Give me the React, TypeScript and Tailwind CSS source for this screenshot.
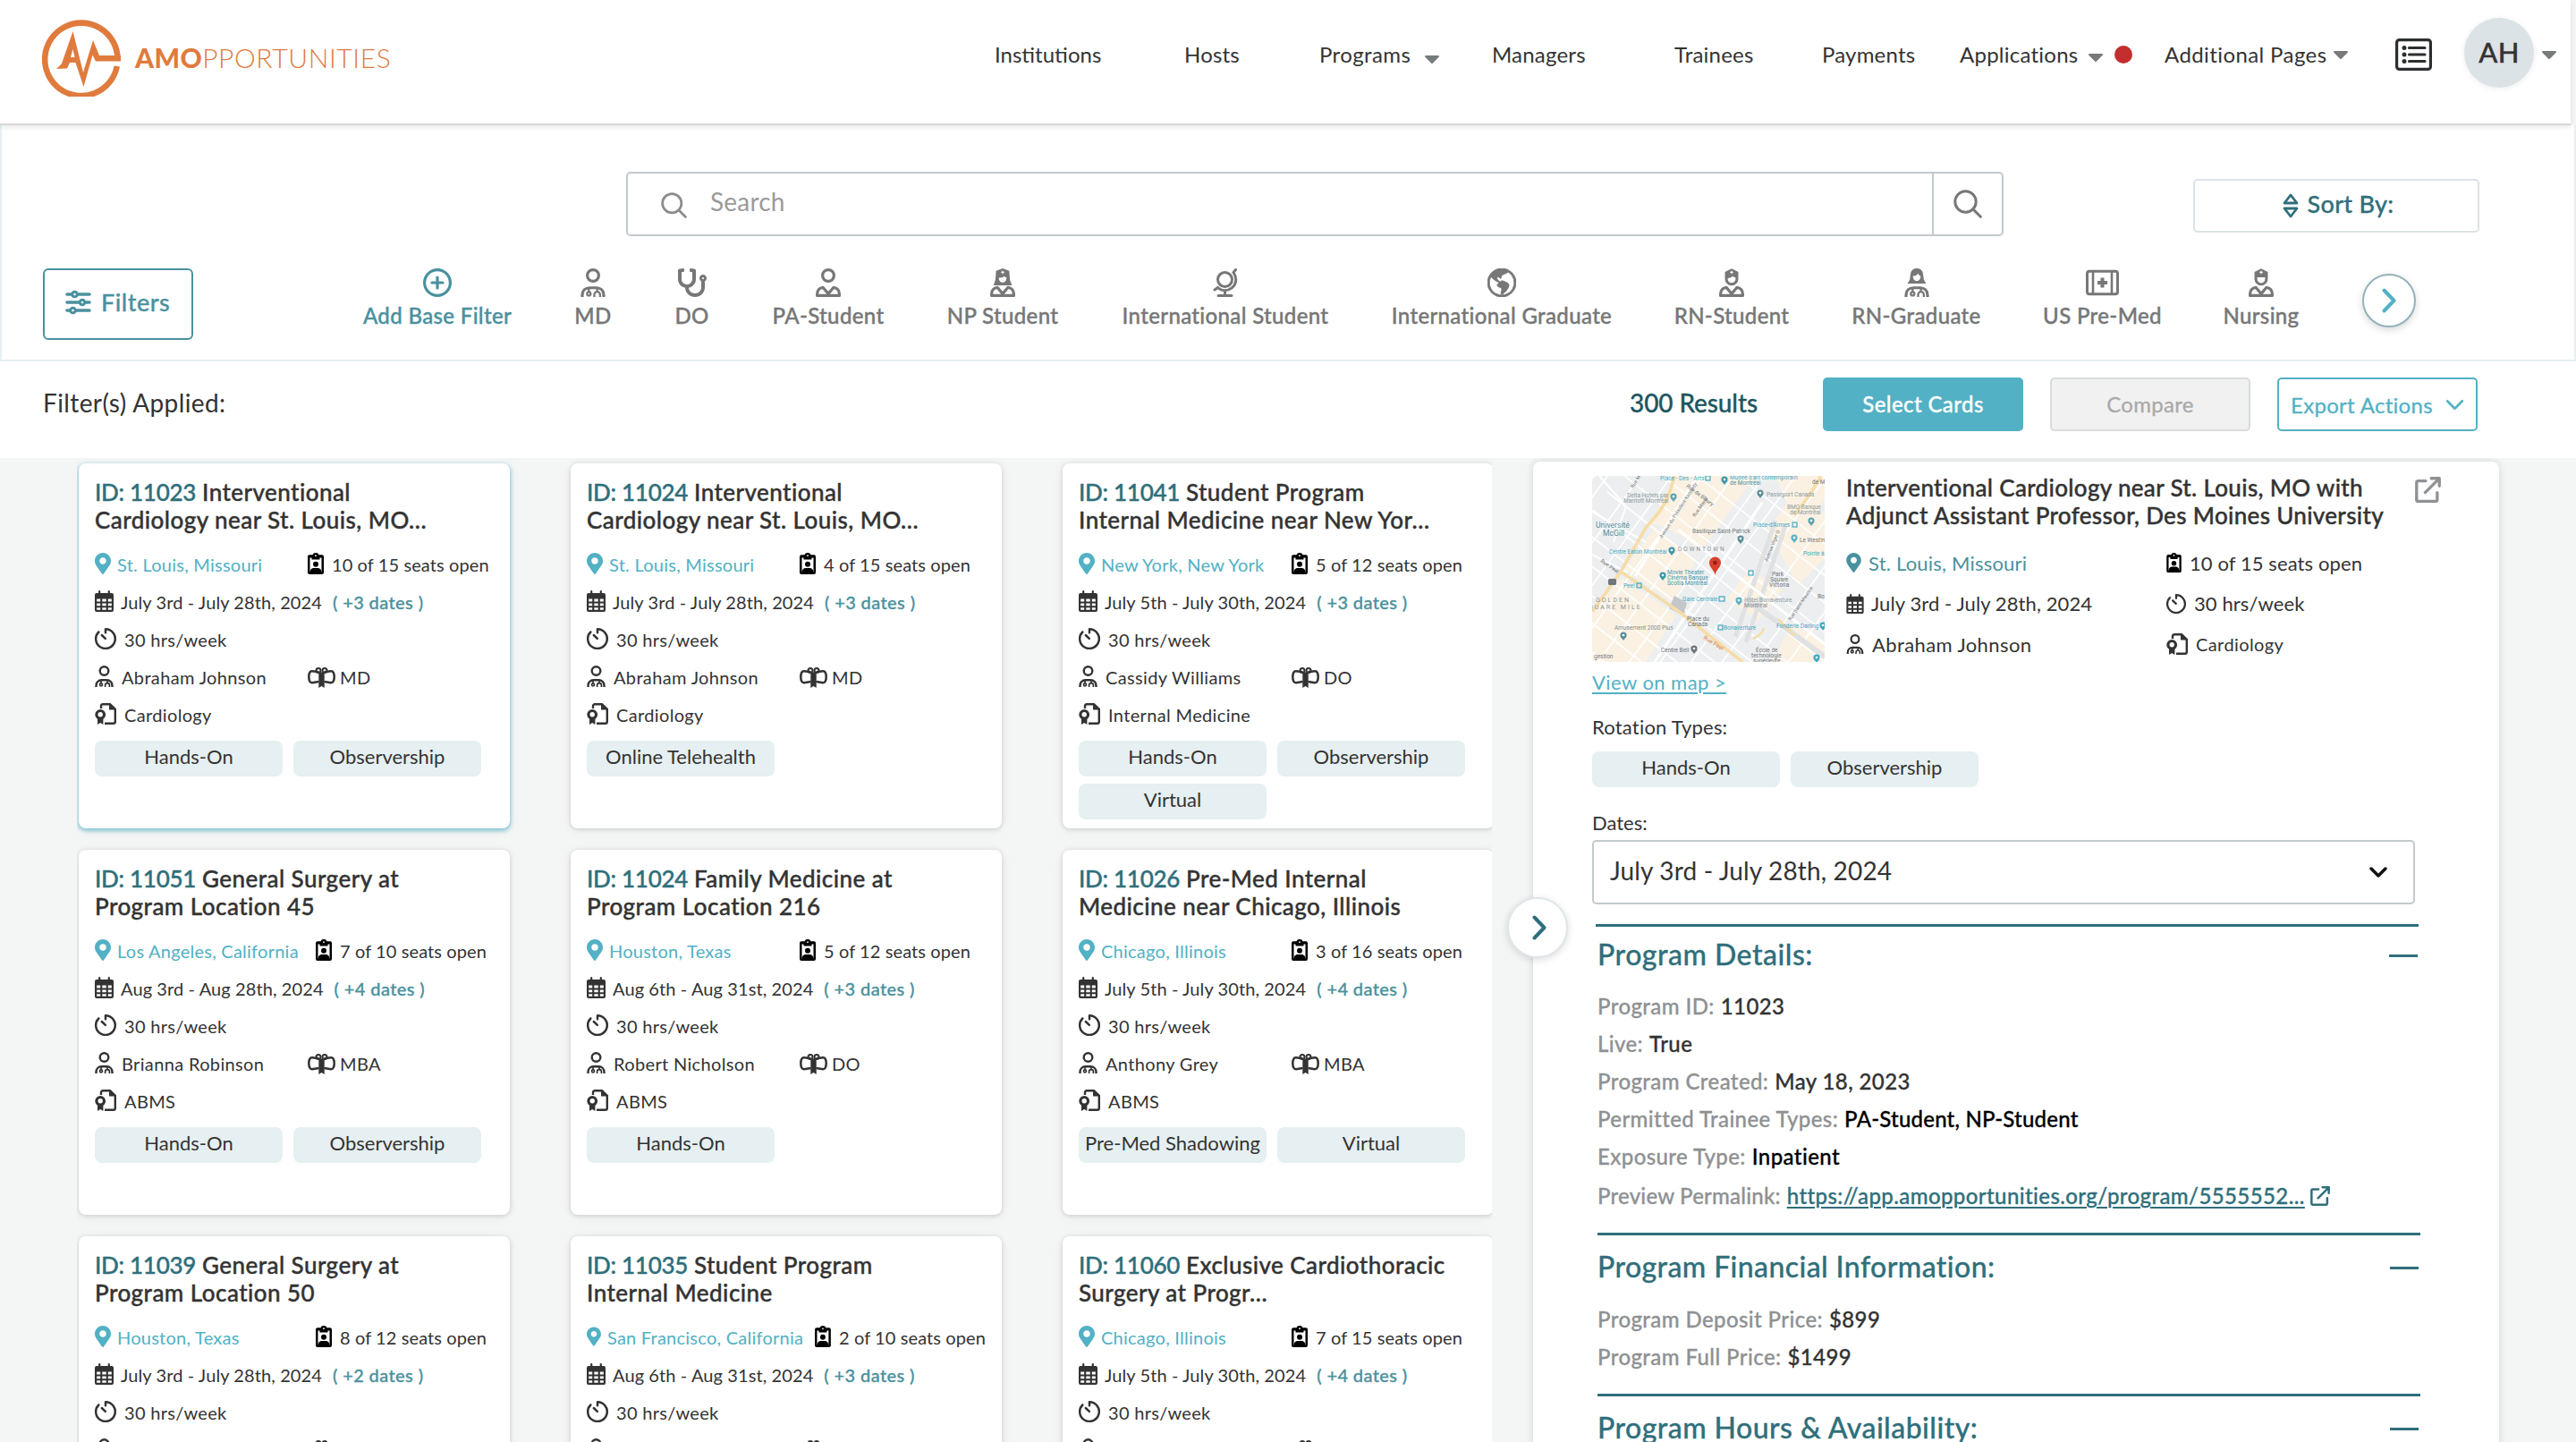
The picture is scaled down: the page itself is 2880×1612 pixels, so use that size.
import type { ReactNode } from "react";
import { FaMapMarkerAlt, FaStethoscope } from "react-icons/fa";
import { BsGlobeAmericas } from "react-icons/bs";

type IconProps = { className?: string };

type Program = {
  id: string;
  title: string[];
  location: string;
  seats: string;
  dates: string;
  more: string;
  doctor: string;
  degree: string;
  specialty: string;
  types: string[];
  wide?: boolean;
};

const programs: Program[] = [
  { id: "11023", title: ["Interventional", "Cardiology near St. Louis, MO…"], location: "St. Louis, Missouri", seats: "10 of 15", dates: "July 3rd - July 28th, 2024", more: "+3", doctor: "Abraham Johnson", degree: "MD", specialty: "Cardiology", types: ["Hands-On", "Observership"] },
  { id: "11024", title: ["Interventional", "Cardiology near St. Louis, MO…"], location: "St. Louis, Missouri", seats: "4 of 15", dates: "July 3rd - July 28th, 2024", more: "+3", doctor: "Abraham Johnson", degree: "MD", specialty: "Cardiology", types: ["Online Telehealth"] },
  { id: "11041", title: ["Student Program", "Internal Medicine near New Yor…"], location: "New York, New York", seats: "5 of 12", dates: "July 5th - July 30th, 2024", more: "+3", doctor: "Cassidy Williams", degree: "DO", specialty: "Internal Medicine", types: ["Hands-On", "Observership", "Virtual"] },
  { id: "11051", title: ["General Surgery at", "Program Location 45"], location: "Los Angeles, California", seats: "7 of 10", dates: "Aug 3rd - Aug 28th, 2024", more: "+4", doctor: "Brianna Robinson", degree: "MBA", specialty: "ABMS", types: ["Hands-On", "Observership"], wide: true },
  { id: "11024", title: ["Family Medicine at", "Program Location 216"], location: "Houston, Texas", seats: "5 of 12", dates: "Aug 6th - Aug 31st, 2024", more: "+3", doctor: "Robert Nicholson", degree: "DO", specialty: "ABMS", types: ["Hands-On"] },
  { id: "11026", title: ["Pre-Med Internal", "Medicine near Chicago, Illinois"], location: "Chicago, Illinois", seats: "3 of 16", dates: "July 5th - July 30th, 2024", more: "+4", doctor: "Anthony Grey", degree: "MBA", specialty: "ABMS", types: ["Pre-Med Shadowing", "Virtual"] },
  { id: "11039", title: ["General Surgery at", "Program Location 50"], location: "Houston, Texas", seats: "8 of 12", dates: "July 3rd - July 28th, 2024", more: "+2", doctor: "Brianna Robinson", degree: "MBA", specialty: "ABMS", types: ["Hands-On"], wide: true },
  { id: "11035", title: ["Student Program", "Internal Medicine"], location: "San Francisco, California", seats: "2 of 10", dates: "Aug 6th - Aug 31st, 2024", more: "+3", doctor: "Robert Nicholson", degree: "DO", specialty: "ABMS", types: ["Hands-On"] },
  { id: "11060", title: ["Exclusive Cardiothoracic", "Surgery at Progr…"], location: "Chicago, Illinois", seats: "7 of 15", dates: "July 5th - July 30th, 2024", more: "+4", doctor: "Anthony Grey", degree: "MBA", specialty: "ABMS", types: ["Virtual"] },
];

/* ---------- Icons ---------- */

function Logo() {
  return (
    <svg className="w-[88px] h-[88px]" viewBox="0 0 88 88" fill="none">
      <path d="M84.5 45A40.7 40.7 0 1 0 83.8 54" stroke="#e07b3e" strokeWidth="6.6" />
      <path d="M83 50.500h6" stroke="#fff" strokeWidth="4" />
      <path
        d="M16 57l6-6L34.500 15 46 61 57 25l7 17h24v6.500H60l-3.500-7L46.500 77 37.500 50H31l-3 6.500zM32 44h4.500l-2-9z"
        fill="#e07b3e"
      />
    </svg>
  );
}

function Caret({ className = "" }: IconProps) {
  return (
    <svg className={`w-4 h-[9px] shrink-0 ${className}`} viewBox="0 0 16 9" fill="#777b7c">
      <path d="M1 0h14a1 1 0 0 1 .7 1.700L8.700 8.700a1 1 0 0 1-1.400 0L.3 1.700A1 1 0 0 1 1 0z" />
    </svg>
  );
}

function ListIcon() {
  return (
    <svg className="w-[41px] h-9" viewBox="0 0 41 36" fill="none" stroke="#2b2f30" strokeWidth="3.200">
      <rect x="1.600" y="1.600" width="37.800" height="32.800" rx="3" />
      <path d="M15.500 10.500H33M15.500 18H33M15.500 25.500H33" strokeLinecap="round" />
      <g fill="#2b2f30" stroke="none">
        <circle cx="10" cy="10.500" r="2.500" />
        <circle cx="10" cy="18" r="2.500" />
        <circle cx="10" cy="25.500" r="2.500" />
      </g>
    </svg>
  );
}

function SearchIcon({ className = "" }: IconProps) {
  return (
    <svg className={className} viewBox="0 0 32 32" fill="none" stroke="currentColor" strokeWidth="3" strokeLinecap="round">
      <circle cx="13.500" cy="13.500" r="11.700" />
      <path d="M22 22l8.300 8.300" />
    </svg>
  );
}

function Chevron({ className = "" }: IconProps) {
  return (
    <svg className={className} viewBox="0 0 16 28" fill="none" stroke="currentColor" strokeWidth="4" strokeLinecap="round" strokeLinejoin="round">
      <path d="M2.500 2.500L13.500 14 2.500 25.500" />
    </svg>
  );
}

function ChevronDown({ className = "" }: IconProps) {
  return (
    <svg className={className} viewBox="0 0 20 12" fill="none" stroke="currentColor" strokeLinecap="round" strokeLinejoin="round">
      <path d="M2 2l8 8 8-8" />
    </svg>
  );
}

function SortIcon() {
  return (
    <svg className="w-[18px] h-7" viewBox="0 0 18 28" fill="none" stroke="currentColor" strokeWidth="2.800" strokeLinejoin="round">
      <path d="M9 2l7 9H2zM9 26l7-9H2z" />
    </svg>
  );
}

function SlidersIcon() {
  return (
    <svg className="w-[29px] h-7" viewBox="0 0 29 28" fill="none" stroke="currentColor" strokeWidth="3.600" strokeLinecap="round">
      <path d="M2 5h25M2 14h25M2 23h25" />
      <g fill="#fff" strokeWidth="3">
        <circle cx="10.500" cy="5" r="2.800" />
        <circle cx="19" cy="14" r="2.800" />
        <circle cx="8.500" cy="23" r="2.800" />
      </g>
    </svg>
  );
}

function PlusCircle() {
  return (
    <svg className="w-8 h-8" viewBox="0 0 32 32" fill="none" stroke="currentColor" strokeWidth="3.200" strokeLinecap="round">
      <circle cx="16" cy="16" r="14.400" />
      <path d="M16 10v12M10 16h12" />
    </svg>
  );
}

const scrubs = "M1.500 24v-1.500c0-3.800 2.600-6.200 6-6.200h6c3.400 0 6 2.400 6 6.200V24";

function DoctorIcon({ className = "" }: IconProps) {
  return (
    <svg className={className} viewBox="0 0 21 24" fill="none" stroke="currentColor" strokeWidth="2.400">
      <circle cx="10.500" cy="6" r="4.800" />
      <path d={scrubs} />
      <path d="M7 16.500v3M14 16.500v3M11.600 24v-2a2.400 2.400 0 0 1 4.800 0v2" strokeWidth="1.700" />
      <circle cx="7" cy="21.300" r="1.500" strokeWidth="1.700" />
    </svg>
  );
}

const collar = "M1.200 22.800v-1.300c0-3 2-5.200 4.800-5.500l4.500 5.300 4.500-5.300c2.800.3 4.800 2.500 4.800 5.500v1.300z";

function StudentIcon() {
  return (
    <svg className="w-7 h-8" viewBox="0 0 21 24" fill="none" stroke="currentColor" strokeWidth="2.400" strokeLinejoin="round">
      <circle cx="10.500" cy="6" r="4.800" />
      <path d={collar} />
    </svg>
  );
}

function NurseIcon({ hair = "none" }: { hair?: "none" | "part" | "long" }) {
  return (
    <svg className="w-7 h-8" viewBox="0 0 21 24" fill="none" stroke="currentColor" strokeWidth="2.400" strokeLinejoin="round">
      {hair === "long" ? (
        <>
          <path d="M10.500 0L16 2l.6 7.500 1.600 4.700H2.800l1.600-4.700L5 2z" fill="currentColor" stroke="none" />
          <path d="M7.300 7.800c2.200.2 3.600-.3 4.500-1.200.5.700 1.200 1.100 1.900 1.200v.6c0 2-1.400 3.400-3.200 3.400s-3.200-1.400-3.200-3.400z" fill="#fff" stroke="none" />
        </>
      ) : (
        <>
          <path d="M4.900 3L10.500.2 16.100 3v5.800a5.600 5.600 0 0 1-11.200 0z" fill="currentColor" stroke="none" />
          <path
            d={hair === "part" ? "M7.200 8.200c1.900 0 3.300-.6 4.200-1.800.5.800 1.400 1.100 2.400 1.300v1.200a3.300 3.300 0 0 1-6.600 0z" : "M7.200 7.500h6.600v1.500a3.300 3.300 0 0 1-6.600 0z"}
            fill="#fff"
            stroke="none"
          />
        </>
      )}
      <path d="M10.500 2v2.600M9.200 3.300h2.600" stroke="#fff" strokeWidth=".9" />
      <path d={collar} />
    </svg>
  );
}

function GraduateIcon() {
  return (
    <svg className="w-7 h-8" viewBox="0 0 21 24" fill="none" stroke="currentColor" strokeWidth="2.400">
      <path d="M10.500 0c3 0 5 2 5.300 5l.6 4.500 1.900 3.300H2.700l1.900-3.300.6-4.500c.3-3 2.300-5 5.300-5z" fill="currentColor" stroke="none" />
      <path d="M7.300 6.400c2.200.2 3.500-1 4.200-2.300.5 1.400 1.200 2 2.200 2.300v.8c0 2-1.400 3.500-3.200 3.500S7.300 9.200 7.300 7.200z" fill="#fff" stroke="none" />
      <path d={scrubs} />
      <path d="M7 16.500v3M14 16.500v3M11.600 24v-2a2.400 2.400 0 0 1 4.800 0v2" strokeWidth="1.700" />
      <circle cx="7" cy="21.300" r="1.500" strokeWidth="1.700" />
    </svg>
  );
}

function GlobeStandIcon() {
  return (
    <svg className="w-7 h-8" viewBox="0 0 28 32" fill="none" stroke="currentColor" strokeWidth="3" strokeLinecap="round">
      <circle cx="13.500" cy="12.500" r="8" />
      <path d="M25.500 1.500l-2.500 3c4.500 6.500 3 13.500-1.500 17.200-5 4.100-11.500 4-16-.2l-3.500 2.500M13.500 25v5M6 30.500h15" />
    </svg>
  );
}

function FirstAidIcon() {
  return (
    <svg className="w-[37px] h-8" viewBox="0 0 37 32" fill="none" stroke="currentColor" strokeWidth="3">
      <rect x="1.500" y="3.300" width="34" height="25.500" rx="2.500" />
      <path d="M8 3.500v25M29 3.500v25" strokeWidth="2.600" />
      <path d="M18.500 10.500v11M13 16h11" strokeWidth="4" />
    </svg>
  );
}

function SeatsIcon({ className = "" }: IconProps) {
  return (
    <svg className={className} viewBox="0 0 18 24" fill="#000">
      <path fillRule="evenodd" d="M5.500 2.200A3.600 3.600 0 0 1 9 0a3.600 3.600 0 0 1 3.500 2.200H16a2 2 0 0 1 2 2V22a2 2 0 0 1-2 2H2a2 2 0 0 1-2-2V4.200a2 2 0 0 1 2-2zM2.500 5.500v16h13v-16h-2v2h-9v-2z" />
      <circle cx="9" cy="12.700" r="3" />
      <path d="M2.500 22.500c0-4 2-5.500 4.500-5.500h4c2.500 0 4.500 1.500 4.500 5.500z" />
      <circle cx="9" cy="3.200" r=".9" fill="#fff" />
    </svg>
  );
}

function CalendarIcon({ className = "" }: IconProps) {
  return (
    <svg className={className} viewBox="0 0 21 24">
      <path
        fill="currentColor"
        d="M5.200 0a1.100 1.100 0 0 1 1.100 1.100V3h8.400V1.100a1.100 1.100 0 0 1 2.200 0V3H19a2 2 0 0 1 2 2v17a2 2 0 0 1-2 2H2a2 2 0 0 1-2-2V5a2 2 0 0 1 2-2h2.100V1.100A1.100 1.100 0 0 1 5.200 0z"
      />
      <path fill="#fff" d="M2.200 9.500h4v2.900h-4zM8.300 9.500h4.400v2.900H8.300zM14.800 9.500h4v2.900h-4zM2.200 14.400h4v2.900h-4zM8.300 14.400h4.400v2.900H8.300zM14.800 14.400h4v2.900h-4zM2.200 19.300h4v2.400h-4zM8.300 19.300h4.400v2.400H8.300zM14.800 19.300h4v2.400h-4z" />
    </svg>
  );
}

function TimerIcon({ className = "" }: IconProps) {
  return (
    <svg className={className} viewBox="0 0 24 24" fill="none" stroke="currentColor" strokeWidth="2.500" strokeLinecap="round" strokeLinejoin="round">
      <path d="M12 5.200V1.300A10.800 10.800 0 1 1 4.300 4.500" />
      <path d="M7.800 8l4 3.800" />
    </svg>
  );
}

function DiplomaIcon() {
  return (
    <svg className="w-[31px] h-[23px] shrink-0" viewBox="0 0 31 23" fill="none" stroke="currentColor" strokeWidth="2.500">
      <path d="M12.500 5.300L5 4.200C2.500 4 1.300 6.800 1.300 10.700S2.500 17.500 5 17.300l7.500-1.200M18.500 5.300L26 4.200c2.500-.2 3.700 2.600 3.700 6.500s-1.200 6.800-3.700 6.600l-7.500-1.200" />
      <circle cx="12" cy="3.600" r="2.500" strokeWidth="2" />
      <circle cx="19" cy="3.600" r="2.500" strokeWidth="2" />
      <path d="M12.300 5.500h6.400V23l-3.200-2-3.200 2z" fill="currentColor" stroke="none" />
    </svg>
  );
}

function CertificateIcon({ className = "" }: IconProps) {
  return (
    <svg className={className} viewBox="0 0 24 24" fill="none" stroke="currentColor" strokeWidth="2.400">
      <path d="M7 6V3.200c0-1.200.8-2 2-2h8l5.800 5.600V20.800c0 1.200-.8 2-2 2H11" />
      <path d="M16 .8V7.500h7.500z" fill="currentColor" stroke="none" />
      <circle cx="6.200" cy="12.800" r="4.300" strokeWidth="3.200" />
      <path d="M3 16.500V24l3.200-2 3.200 2v-7.500z" fill="currentColor" stroke="none" />
    </svg>
  );
}

function ExternalIcon({ className = "" }: IconProps) {
  return (
    <svg className={className} viewBox="0 0 28 28" fill="none" stroke="currentColor" strokeWidth="3.200" strokeLinecap="round" strokeLinejoin="round">
      <path d="M11.500 4.500H3.700a2 2 0 0 0-2 2v18a2 2 0 0 0 2 2h18.300a2 2 0 0 0 2-2v-7.500" />
      <path d="M17.500 1.700h8.800V10M26 2L11 17" />
    </svg>
  );
}

/* ---------- Header ---------- */

function Header() {
  return (
    <header className="relative z-10 w-[2874px] h-[140px] bg-white border-b-2 border-[#d5d8d8] shadow-[0_2px_6px_rgba(0,0,0,0.10)] flex text-[24px] text-[#333]">
      <div className="flex items-center w-[1112px] h-[128px] pl-[47px]">
        <Logo />
        <div className="ml-4 text-[30px] text-[#e07b3e] whitespace-nowrap">
          <span className="font-black tracking-[0.4px]">AMO</span>
          <span className="font-light tracking-[0.6px]">PPORTUNITIES</span>
        </div>
      </div>
      <nav className="flex items-center h-[121px] whitespace-nowrap tracking-[0.2px]">
        <a className="w-[212px] tracking-[0px]">Institutions</a>
        <a className="w-[151px]">Hosts</a>
        <a className="w-[193px] flex items-center tracking-[0.4px]">
          <span className="w-[118px]">Programs</span>
          <Caret className="mt-3" />
        </a>
        <a className="w-[204px]">Managers</a>
        <a className="w-[165px]">Trainees</a>
        <a className="w-[154px]">Payments</a>
        <a className="w-[229px] flex items-center tracking-[0.25px]">
          <span className="w-[144px]">Applications</span>
          <Caret className="mt-2" />
          <span className="ml-[13px] w-5 h-5 rounded-full bg-[#c42e2e]" />
        </a>
        <a className="w-[258px] flex items-center tracking-[0.4px]">
          <span className="w-[189px]">Additional Pages</span>
          <Caret className="mt-[2px]" />
        </a>
        <ListIcon />
        <div className="ml-[36px] mb-1 w-[78px] h-[78px] rounded-full bg-[#dce3e6] flex items-center justify-center text-[31px] font-medium [-webkit-text-stroke:0.4px] shadow-[0_1px_6px_rgba(0,0,0,0.08)]">
          AH
        </div>
        <Caret className="ml-[9px] mt-[2px]" />
      </nav>
    </header>
  );
}

/* ---------- Search and base filters ---------- */

function BaseFilter({ icon, label, width }: { icon: ReactNode; label: string; width: string }) {
  return (
    <div className={`${width} shrink-0 flex flex-col items-center whitespace-nowrap`}>
      <div className="h-8 flex items-center">{icon}</div>
      <span className="mt-[7px] leading-[28px]">{label}</span>
    </div>
  );
}

function FilterBar() {
  return (
    <section className="h-[264px] border-2 border-t-0 border-[#e6eff2] bg-white">
      <div className="flex pt-[52px] pl-[698px]">
        <div className="w-[1540px] h-[72px] border-2 border-[#c3c9cc] rounded-[5px] flex">
          <div className="flex-1 flex items-center pl-[37px]">
            <SearchIcon className="w-[29px] h-[29px] mt-[2px] text-[#8c8c8c]" />
            <span className="ml-[26px] mb-[6px] text-[28px] text-[#9a9a9a] tracking-[0.2px]">Search</span>
          </div>
          <div className="w-[78px] border-l-2 border-[#c3c9cc] flex items-center justify-center text-[#777]">
            <SearchIcon className="w-8 h-8" />
          </div>
        </div>
        <div className="mt-2 ml-[212px] w-[320px] h-[60px] border-2 border-[#dce3e6] rounded-[5px] flex items-center justify-center gap-[10px] text-[27px] text-[#2f6f7b] font-medium tracking-[0.3px] [-webkit-text-stroke:0.3px] pl-1">
          <SortIcon />
          <span className="mb-1">Sort By:</span>
        </div>
      </div>
      <div className="flex mt-9 pl-[46px]">
        <button className="w-[168px] h-[80px] border-2 border-[#4a919e] rounded-[6px] flex items-center pl-[23px] pb-1 gap-[11px] text-[27px] font-medium tracking-[0.5px] [-webkit-text-stroke:0.3px] text-[#4a919e]">
          <SlidersIcon />
          Filters
        </button>
        <div className="ml-[189px] flex gap-[71px] text-[24px] font-medium text-[#777] tracking-[0.35px] [-webkit-text-stroke:0.4px]">
          <div className="text-[#4a919e]">
            <BaseFilter icon={<PlusCircle />} label="Add Base Filter" width="w-[168px]" />
          </div>
          <BaseFilter icon={<DoctorIcon className="w-7 h-8" />} label="MD" width="w-[38px]" />
          <BaseFilter icon={<FaStethoscope className="w-8 h-8" />} label="DO" width="w-[41px]" />
          <BaseFilter icon={<StudentIcon />} label="PA-Student" width="w-[122px]" />
          <BaseFilter icon={<NurseIcon hair="long" />} label="NP Student" width="w-[126px]" />
          <BaseFilter icon={<GlobeStandIcon />} label="International Student" width="w-[230px]" />
          <BaseFilter icon={<BsGlobeAmericas className="w-8 h-8" stroke="currentColor" strokeWidth="0.500" />} label="International Graduate" width="w-[246px]" />
          <BaseFilter icon={<NurseIcon hair="part" />} label="RN-Student" width="w-[126px]" />
          <BaseFilter icon={<GraduateIcon />} label="RN-Graduate" width="w-[145px]" />
          <BaseFilter icon={<FirstAidIcon />} label="US Pre-Med" width="w-[129px]" />
          <BaseFilter icon={<NurseIcon />} label="Nursing" width="w-[84px]" />
        </div>
        <button className="ml-[71px] mt-[6px] w-[60px] h-[60px] rounded-full border-2 border-[#93b3ba] bg-white shadow-[0_3px_8px_rgba(0,0,0,0.15)] flex items-center justify-center text-[#52b1c4]">
          <Chevron className="w-4 h-7" />
        </button>
      </div>
    </section>
  );
}

function ResultsBar() {
  return (
    <section className="h-[108px] bg-white flex pt-[18px] pl-12 text-[24px] whitespace-nowrap">
      <div className="w-[1774px] pt-[11px] text-[28px] leading-[34px] text-[#333] tracking-[0.4px]">Filter(s) Applied:</div>
      <div className="w-[216px] pt-[11px] text-[28px] leading-[34px] text-[#1f5660] font-medium tracking-[-0.1px] [-webkit-text-stroke:0.3px]">300 Results</div>
      <div className="flex gap-[30px] tracking-[0.3px]">
        <button className="w-[224px] h-[60px] rounded-[5px] bg-[#52b1c4] text-white font-medium [-webkit-text-stroke:0.3px] tracking-[0.4px]">Select Cards</button>
        <button className="w-[224px] h-[60px] rounded-[5px] bg-[#f1f1f1] border-2 border-[#d9dcdc] text-[#a9a9a9] [-webkit-text-stroke:0.3px]">Compare</button>
        <button className="w-[224px] h-[60px] rounded-[5px] border-2 border-[#52b1c4] text-[#52b1c4] [-webkit-text-stroke:0.3px] flex items-center pl-[13px] pt-[1px]">
          <span className="w-[173px] text-left">Export Actions</span>
          <ChevronDown className="w-[21px] h-[13px] stroke-[2.5]" />
        </button>
      </div>
    </section>
  );
}

/* ---------- Program cards ---------- */

function TypeChip({ label }: { label: string }) {
  return (
    <div className="w-[210px] h-10 rounded-[8px] bg-[#e6eff1] pb-[5px] flex items-center justify-center text-[22px] text-[#333] whitespace-nowrap">
      {label}
    </div>
  );
}

function ProgramCard({ program, selected }: { program: Program; selected: boolean }) {
  return (
    <div
      className={`w-[482px] h-[408px] shrink-0 rounded-[8px] bg-white px-[18px] pt-[17px] text-[20px] text-[#333] whitespace-nowrap ${
        selected
          ? "shadow-[0_2px_4px_1px_rgba(82,177,196,0.65),0_2px_14px_rgba(0,0,0,0.06)]"
          : "shadow-[0_1px_5px_rgba(0,0,0,0.16),0_2px_14px_rgba(0,0,0,0.05)]"
      }`}
    >
      <h3 className="text-[26px] leading-[31px] font-medium tracking-[0.45px] [-webkit-text-stroke:0.4px]">
        <span className="text-[#2f6f7b] tracking-[-0.3px]">ID: {program.id}</span> {program.title[0]}
        <br />
        {program.title[1]}
      </h3>
      <div className="mt-[13px] h-[42px] flex items-center">
        <div className={`${program.wide ? "min-w-[234px]" : "min-w-[225px]"} mr-[13px] flex items-center text-[#52b1c4] tracking-[0.25px]`}>
          <FaMapMarkerAlt className="w-[18px] h-6 mb-[2px] mr-[7px]" />
          {program.location}
        </div>
        <SeatsIcon className="w-[18px] h-6 mb-[2px] mr-[9px]" />
        <span className="tracking-[0.1px]">{program.seats} seats open</span>
      </div>
      <div className="h-[42px] flex items-center">
        <CalendarIcon className="w-[21px] h-6 mb-[2px] mr-2" />
        <span className="tracking-[0.1px]">{program.dates}</span>
        <span className="ml-3 font-medium text-[#4a919e] tracking-[0.4px] [-webkit-text-stroke:0.3px]">( {program.more} dates )</span>
      </div>
      <div className="h-[42px] flex items-center tracking-[0.3px]">
        <TimerIcon className="w-6 h-6 mb-[2px] mr-[9px]" />
        30 hrs/week
      </div>
      <div className="h-[42px] flex items-center tracking-[0.35px]">
        <div className="min-w-[238px] flex items-center">
          <DoctorIcon className="w-[21px] h-6 mb-[2px] mr-[9px]" />
          {program.doctor}
        </div>
        <DiplomaIcon />
        <span className="ml-[5px]">{program.degree}</span>
      </div>
      <div className="h-[42px] flex items-center tracking-[0.35px]">
        <CertificateIcon className="w-6 h-6 mb-[2px] mr-[9px]" />
        {program.specialty}
      </div>
      <div className="mt-2 flex flex-wrap gap-x-3 gap-y-2">
        {program.types.map((type) => (
          <TypeChip key={type} label={type} />
        ))}
      </div>
    </div>
  );
}

/* ---------- Map thumbnail ---------- */

const mapLabels: { x: number; y: number; text: string; color?: string; size?: number }[] = [
  { x: 76, y: 5, text: "Place - Des - Arts", color: "#3fa9c4" },
  { x: 154, y: 4, text: "Musée d'art contemporain", color: "#3fa9c4" },
  { x: 154, y: 10, text: "de Montréal", color: "#4f8f9c" },
  { x: 246, y: 9, text: "de M" },
  { x: 39, y: 24, text: "Delta Hotels par", color: "#8a9aa0" },
  { x: 35, y: 30, text: "Marriott Montréal", color: "#8a9aa0" },
  { x: 195, y: 23, text: "Passeport Canada", color: "#8a9aa0" },
  { x: 218, y: 37, text: "BMO Banque", color: "#8a9aa0" },
  { x: 221, y: 43, text: "de Montréal", color: "#8a9aa0" },
  { x: 4, y: 58, text: "Université", color: "#5b8f9b", size: 8.6 },
  { x: 12, y: 67, text: "McGill", color: "#5b8f9b", size: 8.6 },
  { x: 112, y: 64, text: "Basilique Saint-Patrick" },
  { x: 180, y: 57, text: "Place-d'Armes", color: "#3fa9c4" },
  { x: 232, y: 74, text: "Le Westin" },
  { x: 19, y: 87, text: "Centre Eaton Montréal", color: "#3fa9c4" },
  { x: 236, y: 89, text: "Pointe à", color: "#3fa9c4" },
  { x: 84, y: 110, text: "Movie Theater", color: "#3f97ac" },
  { x: 84, y: 116, text: "Cinéma Banque", color: "#3f97ac" },
  { x: 84, y: 122, text: "Scotia Montréal", color: "#3f97ac" },
  { x: 201, y: 112, text: "Park" },
  { x: 199, y: 118, text: "Square" },
  { x: 198, y: 124, text: "Victoria" },
  { x: 35, y: 125, text: "Peel", color: "#3fa9c4" },
  { x: 101, y: 140, text: "Gare Centrale", color: "#3fa9c4" },
  { x: 170, y: 141, text: "Hôtel Bonaventure", color: "#8a9aa0" },
  { x: 170, y: 147, text: "Montréal", color: "#7b8589" },
  { x: 252, y: 137, text: "Bo" },
  { x: 106, y: 162, text: "Place du" },
  { x: 107, y: 168, text: "Canada" },
  { x: 25, y: 172, text: "Amusement 2000 Plus", color: "#7d8f95" },
  { x: 147, y: 172, text: "Bonaventure", color: "#3fa9c4" },
  { x: 206, y: 170, text: "Fonderie Darling", color: "#3fa9c4" },
  { x: 77, y: 197, text: "Centre Bell" },
  { x: 183, y: 197, text: "École de" },
  { x: 178, y: 203, text: "technologie" },
  { x: 180, y: 209, text: "supérieure" },
  { x: 2, y: 204, text: "gestion" },
];

const mapPins = [
  [91, 23, "#5fa3b0"], [148, 4, "#3f97ac"], [188, 19, "#5f8f9b"], [245, 50, "#5fa3b0"], [166, 70, "#5f8f9b"],
  [226, 69, "#5fb3c4"], [89, 83, "#3f97ac"], [79, 111, "#3f97ac"], [164, 139, "#5fb3c4"], [35, 178, "#5f8f9b"],
  [114, 193, "#6b7377"], [258, 167, "#3fa9c4"], [251, 203, "#3fa9c4"],
] as const;

const crossStreets = [-100, -72, -48, -22, 4, 30, 54, 80, 106, 130, 156, 184];
const longStreets = [-150, -120, -92, -64, -36, -8, 20, 48, 76, 106, 136];

function MapThumb() {
  return (
    <svg className="w-[260px] h-[208px] rounded-[6px]" viewBox="0 0 260 208" fontFamily="Roboto, sans-serif">
      <rect width="260" height="208" fill="#eceeef" />
      <path d="M92 0h90l-60 84-24-18-32-14zM205 0h55v26l-34 60-26-14 20-36zM36 104l34-46 46 36-26 48zM0 150l34-36 60 42-34 52H0zM150 138l26-34 36 24-26 34zM196 60l30-40 34 22v50l-30 30zM200 208l24-42 36 20v22z" fill="#fbf1e2" />
      <path d="M0 40l60 34M8 0l30 34-14 40M0 88l40 20" stroke="#fff" strokeWidth="2" fill="none" />
      <g stroke="#fff" strokeWidth="1.700">
        {crossStreets.map((y) => (
          <path key={y} d={`M-90 ${y}H220`} transform="translate(90 70) rotate(38)" />
        ))}
        {longStreets.map((x) => (
          <path key={x} d={`M${x} -150V220`} transform="translate(130 100) rotate(36)" />
        ))}
      </g>
      <path d="M205 50L160 180M216 56L172 186" stroke="#dfe1e2" strokeWidth="5" />
      <path d="M175 140l85 62" stroke="#dfe1e2" strokeWidth="6" />
      <path d="M92 134l14 8-4 14-16-8z" fill="#c3c7c9" />
      <path d="M118 0l-70 112M190 30L70 208M96 60l164 128" stroke="#fff" strokeWidth="3.200" />
      <g stroke="#f6dca6" strokeWidth="3.600" fill="none">
        <path d="M92 0C84 34 72 44 60 58L32 107 0 152" />
        <path d="M32 107L99 153 168 208" />
        <path d="M256 0L244 20 226 44" />
        <path d="M180 182c8-4 12-8 12-12M208 160l18 18" strokeWidth="2.500" />
      </g>
      <g fill="#6d7478" fontSize="6.500">
        {mapLabels.map((l) => (
          <text key={`${l.x}-${l.y}`} x={l.x} y={l.y} fill={l.color} fontSize={l.size}>
            {l.text}
          </text>
        ))}
        <text x="96" y="84" letterSpacing="2" fill="#8b9296">DOWNTOWN</text>
        <text x="4" y="141" letterSpacing="2" fill="#8b9296" fontSize="7">GOLDEN</text>
        <text x="-4" y="149" letterSpacing="2" fill="#8b9296" fontSize="7">QUARE MILE</text>
        <text transform="translate(78 70) rotate(-57)" fontSize="5.500">Avenue du Président-Kennedy</text>
        <text transform="translate(105 12) rotate(37)" fontSize="6">Rue de Bleury</text>
        <text transform="translate(115 46) rotate(-55)" fontSize="5.500">Rue Mayor</text>
        <text transform="translate(46 14) rotate(-58)" fontSize="5.500">Rue Milton</text>
        <text transform="translate(9 96) rotate(35)" fontSize="6">Rue Peel</text>
        <text transform="translate(196 96) rotate(-68)" fontSize="5.500">Avenue Viger O</text>
        <text transform="translate(222 162) rotate(-56)" fontSize="5.500">Rue Saint-Maurice</text>
        <text transform="translate(124 182) rotate(32)" fill="#dd7a3c">Rue Peel</text>
      </g>
      {mapPins.map(([x, y, color]) => (
        <g key={`${x}-${y}`} fill={color}>
          <circle cx={x} cy={y} r="3.600" />
          <path d={`M${x - 3} ${y + 2}L${x} ${y + 6}L${x + 3} ${y + 2}z`} />
          <circle cx={x} cy={y} r="1.300" fill="#fff" />
        </g>
      ))}
      <g fill="none" stroke="#3fa9c4" strokeWidth="1.200">
        <rect x="127" y="0" width="5" height="5" />
        <rect x="224" y="52" width="5" height="5" />
        <rect x="175" y="106" width="5" height="5" />
        <rect x="50" y="120" width="5" height="5" />
        <rect x="142" y="135" width="6" height="5" />
        <rect x="141" y="167" width="5" height="5" />
      </g>
      <rect x="18" y="115" width="9" height="7" rx="1.500" fill="#70777b" />
      <path d="M137.500 111c-1-6-6.500-8.500-6.500-14a6.500 6.500 0 0 1 13 0c0 5.500-5.500 8-6.500 14z" fill="#d9402b" />
      <circle cx="137.500" cy="97" r="2.300" fill="#8f1d14" />
    </svg>
  );
}

/* ---------- Detail panel ---------- */

function Minus() {
  return <span className="mt-1 w-8 h-[3px] bg-[#2f6f7b]" />;
}

function Field({ label, children }: { label: string; children: ReactNode }) {
  return (
    <div className="h-[42px] leading-[42px] flex gap-[7px]">
      <span className="text-[#8f9192]">{label}</span>
      {children}
    </div>
  );
}

function DetailPanel() {
  return (
    <aside className="relative ml-[46px] mt-1 w-[1080px] h-[1200px] rounded-[8px] bg-white shadow-[0_0_8px_rgba(0,0,0,0.14)] pl-[66px] pt-4 text-[#333] whitespace-nowrap">
      <button className="absolute left-[-29px] top-[487px] w-[68px] h-[68px] rounded-full bg-white border-2 border-[#dfe6e9] shadow-[0_2px_8px_rgba(0,0,0,0.14)] flex items-center justify-center text-[#2f6f7b]">
        <Chevron className="w-4 h-7 ml-1" />
      </button>

      <div className="flex h-[208px]">
        <MapThumb />
        <div className="ml-6 w-[636px] text-[22px] tracking-[0.1px]">
          <h2 className="-mt-[2px] text-[26px] leading-[31px] font-medium tracking-[0.33px] [-webkit-text-stroke:0.4px]">
            Interventional Cardiology near St. Louis, MO with
            <br />
            Adjunct Assistant Professor, Des Moines University
          </h2>
          <div className="mt-[14px] grid grid-cols-[358px_1fr]">
            <div className="h-[46px] flex items-center text-[#4a919e] tracking-[0.2px]">
              <FaMapMarkerAlt className="w-[17px] h-[22px] mr-2" />
              St. Louis, Missouri
            </div>
            <div className="h-[46px] flex items-center">
              <SeatsIcon className="w-[17px] h-[22px] mr-[9px]" />
              10 of 15 seats open
            </div>
            <div className="h-[45px] flex items-center">
              <CalendarIcon className="w-5 h-[22px] mr-2" />
              July 3rd - July 28th, 2024
            </div>
            <div className="h-[45px] flex items-center">
              <TimerIcon className="w-[22px] h-[22px] mr-[9px]" />
              30 hrs/week
            </div>
            <div className="h-[46px] flex items-center tracking-[0.4px]">
              <DoctorIcon className="w-5 h-[22px] mr-[9px]" />
              Abraham Johnson
            </div>
            <div className="h-[46px] flex items-center text-[20px] tracking-[0.4px]">
              <CertificateIcon className="w-6 h-6 mr-[9px]" />
              Cardiology
            </div>
          </div>
        </div>
        <ExternalIcon className="w-[29px] h-[29px] mt-[1px] text-[#8f9295]" />
      </div>

      <div className="mt-2 text-[22px] leading-[30px] text-[#52b1c4]">
        <a className="underline underline-offset-[3px] decoration-2 tracking-[0.45px]">View on map &gt;</a>
      </div>
      <div className="mt-5 text-[22px] leading-[30px] tracking-[0.2px]">Rotation Types:</div>
      <div className="mt-3 flex gap-3">
        <TypeChip label="Hands-On" />
        <TypeChip label="Observership" />
      </div>
      <div className="mt-[25px] text-[22px] leading-[30px]">Dates:</div>
      <div className="mt-1 w-[920px] h-[72px] border-2 border-[#c3c9cc] rounded-[5px] flex items-center justify-between pl-[18px] pr-[29px] pb-1 text-[28px] tracking-[0.15px]">
        July 3rd - July 28th, 2024
        <ChevronDown className="w-5 h-3 mt-1 stroke-[3.5] text-[#111]" />
      </div>

      <section className="ml-1 mt-[22px] w-[920px] border-t-[3px] border-[#2f6f7b] pl-[2px] text-[24px] font-medium tracking-[0.4px] [-webkit-text-stroke:0.3px]">
        <div className="h-[72px] pr-[1px] flex items-center justify-between text-[32px] text-[#2f6f7b] pb-[11px] tracking-[0.5px]">
          Program Details:
          <Minus />
        </div>
        <div className="-mt-[4px]">
          <Field label="Program ID:">11023</Field>
          <Field label="Live:">True</Field>
          <Field label="Program Created:">May 18, 2023</Field>
          <Field label="Permitted Trainee Types:">
            <span className="text-black tracking-[0.2px]">PA-Student, NP-Student</span>
          </Field>
          <Field label="Exposure Type:">
            <span className="text-black">Inpatient</span>
          </Field>
          <div className="h-[42px] mt-[2px] leading-[42px] flex gap-[7px]">
            <span className="text-[#8f9192] tracking-[0.2px]">Preview Permalink:</span>
            <a className="flex items-center text-[#2f6f7b]">
              <span className="underline underline-offset-[3px] decoration-2">https://app.amopportunities.org/program/5555552...</span>
              <ExternalIcon className="w-[22px] h-[22px] ml-[6px]" />
            </a>
          </div>
        </div>
      </section>

      <section className="ml-[6px] mt-5 w-[920px] border-t-[3px] border-[#2f6f7b] text-[24px] font-medium tracking-[0.4px] [-webkit-text-stroke:0.3px]">
        <div className="h-[75px] pr-[2px] flex items-center justify-between text-[32px] text-[#2f6f7b] pb-[6px] tracking-[0.4px]">
          Program Financial Information:
          <Minus />
        </div>
        <div className="-mt-[2px]">
          <Field label="Program Deposit Price:">$899</Field>
          <Field label="Program Full Price:">$1499</Field>
        </div>
      </section>

      <section className="ml-[6px] mt-5 w-[920px] border-t-[3px] border-[#2f6f7b]">
        <div className="h-[75px] pr-[2px] flex items-center justify-between text-[32px] font-medium text-[#2f6f7b] pb-[6px] tracking-[0.45px] [-webkit-text-stroke:0.3px]">
          Program Hours &amp; Availability:
          <Minus />
        </div>
      </section>
    </aside>
  );
}

export default function App() {
  return (
    <div className="w-[2880px] h-[1612px] overflow-hidden bg-[#f4f6f6] font-['Lato',sans-serif]">
      <Header />
      <FilterBar />
      <ResultsBar />
      <main className="flex h-[1100px] overflow-hidden">
        <div className="w-[1582px] ml-[86px] shrink-0 overflow-hidden pl-[2px] pt-[6px]">
          <div className="w-[1582px] grid grid-cols-[482px_482px_482px] gap-x-[68px] gap-y-6">
            {programs.map((program, i) => (
              <ProgramCard key={i} program={program} selected={i === 0} />
            ))}
          </div>
        </div>
        <DetailPanel />
      </main>
    </div>
  );
}
